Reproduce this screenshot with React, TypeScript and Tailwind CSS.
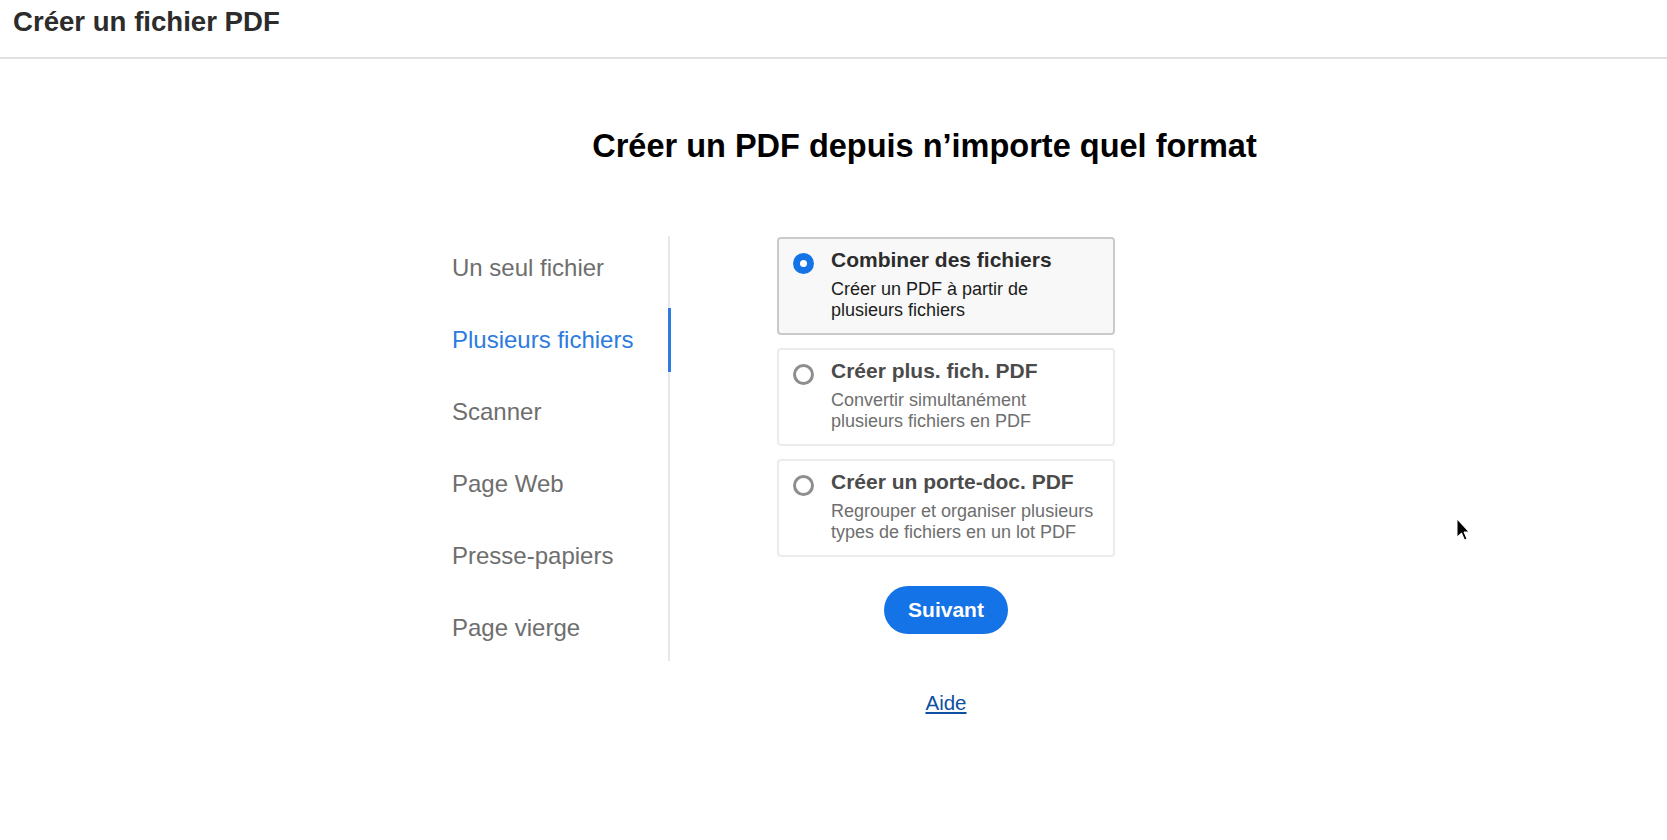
import React from 'react';

interface Option {
    title: string;
    description: string[];
}

const navItems = [
    'Un seul fichier',
    'Plusieurs fichiers',
    'Scanner',
    'Page Web',
    'Presse-papiers',
    'Page vierge',
];

const options: Option[] = [
    { title: 'Combiner des fichiers', description: ['Créer un PDF à partir de', 'plusieurs fichiers'] },
    { title: 'Créer plus. fich. PDF', description: ['Convertir simultanément', 'plusieurs fichiers en PDF'] },
    { title: 'Créer un porte-doc. PDF', description: ['Regrouper et organiser plusieurs', 'types de fichiers en un lot PDF'] },
];

const Radio: React.FC<{ checked: boolean }> = ({ checked }) =>
    checked ? (
        <span className="mt-[5px] flex h-[21px] w-[21px] shrink-0 items-center justify-center rounded-full bg-[#1473e6]">
            <span className="h-[7px] w-[7px] rounded-full bg-white" />
        </span>
    ) : (
        <span className="mt-[5px] h-[21px] w-[21px] shrink-0 rounded-full border-[3px] border-[#8e8e8e] bg-white" />
    );

const OptionCard: React.FC<{ option: Option; selected: boolean }> = ({ option, selected }) => (
    <div
        className={`flex h-[98px] gap-[17px] rounded-[4px] border-2 px-[14px] pt-[9px] ${
            selected ? 'border-[#cacaca] bg-[#f8f8f8]' : 'border-[#ebebeb] bg-white'
        }`}
    >
        <Radio checked={selected} />
        <div className="flex flex-col">
            <span className={`text-[21px] font-bold leading-[24px] ${selected ? 'text-[#2c2c2c]' : 'text-[#4b4b4b]'}`}>
                {option.title}
            </span>
            <div className={`mt-[7px] text-[18px] leading-[21px] ${selected ? 'text-[#1c1c1c]' : 'text-[#6e6e6e]'}`}>
                {option.description.map((line) => (
                    <div key={line}>{line}</div>
                ))}
            </div>
        </div>
    </div>
);

export default function App() {
    const activeNav = 1;
    const selectedOption = 0;

    return (
        <div className="relative min-h-[840px] w-full bg-white font-['Liberation_Sans',Arial,sans-serif]">
            {/* Header */}
            <div className="flex h-[59px] items-start border-b-2 border-[#e1e1e1] px-[13px] pt-[6px]">
                <h1 className="text-[27.6px] font-bold leading-[32px] text-[#2c2c2c]">Créer un fichier PDF</h1>
            </div>

            {/* Title */}
            <div className="pl-[182px] pt-[69px] text-center">
                <h2 className="text-[32.5px] font-bold leading-[36px] text-black">
                    Créer un PDF depuis n’importe quel format
                </h2>
            </div>

            {/* Content */}
            <div className="mt-[72px] flex items-start pl-[452px]">
                <nav className="h-[425px] w-[218px] border-r-2 border-[#e8e8e8]">
                    <div className="-mt-[4px] flex flex-col">
                        {navItems.map((item, index) => (
                            <div key={item} className="relative flex h-[72px] items-center">
                                <span
                                    className={`text-[24px] leading-[28px] ${
                                        index === activeNav ? 'text-[#2d7be0]' : 'text-[#6e6e6e]'
                                    }`}
                                >
                                    {item}
                                </span>
                                {index === activeNav && (
                                    <span className="absolute right-[-2.5px] top-[4px] h-[64px] w-[3px] bg-[#2d7be0]" />
                                )}
                            </div>
                        ))}
                    </div>
                </nav>

                <div className="ml-[107px] flex w-[338px] flex-col pt-[1px]">
                    <div className="flex flex-col gap-[13px]">
                        {options.map((option, index) => (
                            <OptionCard key={option.title} option={option} selected={index === selectedOption} />
                        ))}
                    </div>
                    <button className="mx-auto mt-[29px] flex h-[48px] w-[124px] items-center justify-center rounded-full bg-[#1473e6] text-[21px] font-bold text-white">
                        Suivant
                    </button>
                    <a href="#" className="mx-auto mt-[57px] text-[20.5px] leading-[24px] text-[#0d4fa0] underline">
                        Aide
                    </a>
                </div>
            </div>

            {/* Mouse pointer */}
            <svg className="absolute left-[1456px] top-[518px]" width="14" height="24" viewBox="0 0 14 24">
                <path d="M1 1 L1 19 L5.5 15 L8.5 22 L11 21 L8 14 L13 14 Z" fill="#000" stroke="#fff" strokeWidth="1" />
            </svg>
        </div>
    );
}
